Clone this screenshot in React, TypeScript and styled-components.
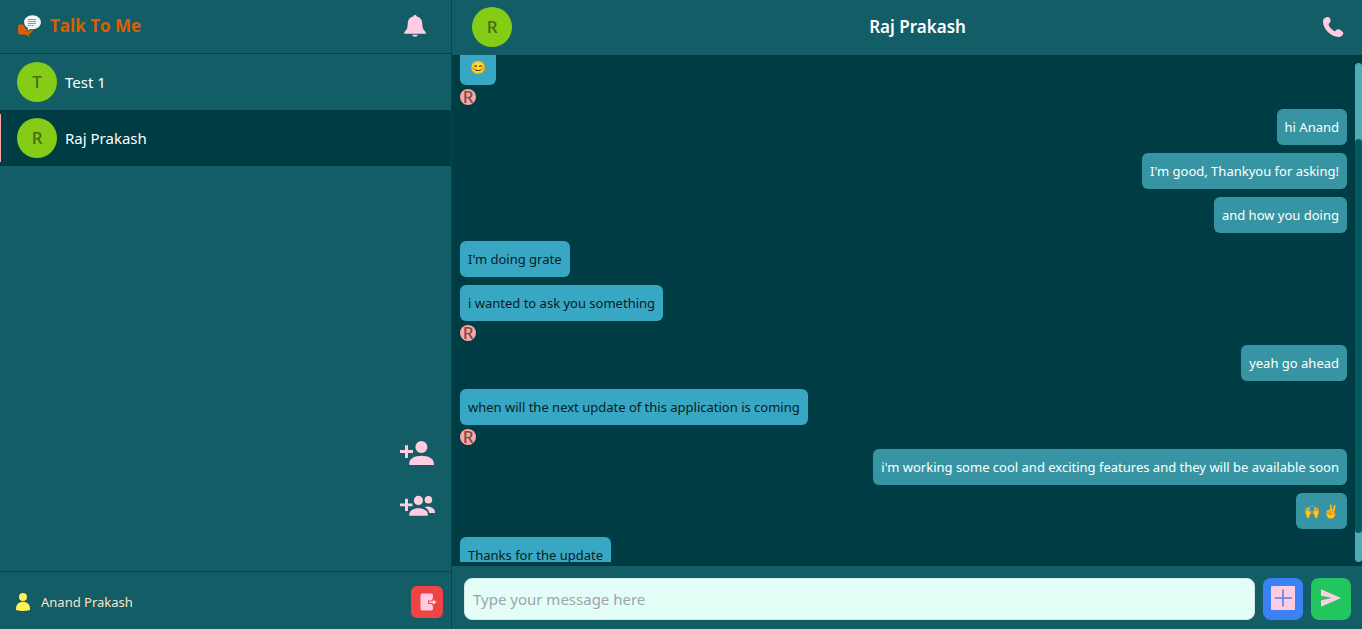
import React, { useLayoutEffect, useRef } from 'react';
import styled, { createGlobalStyle } from 'styled-components';

const color = {
  deep: '#003c43',
  panel: '#135d66',
  line: '#07464e',
  mint: '#e3fef7',
  pink: '#ffcce1',
  brand: '#d95f02',
};

const GlobalStyle = createGlobalStyle`
  *, *::before, *::after { box-sizing: border-box; }
  body {
    margin: 0;
    background: ${color.panel};
    color: #fff;
    font: 13px/20px "Noto Sans", "Open Sans", sans-serif;
  }
  button, input { font: inherit; }
  h1, h2, ul, p { margin: 0; padding: 0; }
  ul { list-style: none; }
  svg { display: block; }
`;

const Page = styled.div`
  display: grid;
  grid-template-columns: minmax(0, 452fr) minmax(0, 910fr);
  height: 100vh;
`;

const Sidebar = styled.aside`
  display: flex;
  flex-direction: column;
  min-height: 0;
  border-right: 1px solid ${color.line};
`;

const SidebarHeader = styled.header`
  display: flex;
  align-items: center;
  justify-content: space-between;
  height: 54px;
  padding: 0 25px 1px 18px;
  border-bottom: 1px solid ${color.line};
`;

const Brand = styled.div`
  display: flex;
  align-items: center;
  gap: 8px;
`;

const BrandName = styled.h1`
  color: ${color.brand};
  font-family: "Open Sans", "Noto Sans", sans-serif;
  font-size: 17px;
  line-height: 24px;
  font-weight: 700;
`;

const IconButton = styled.button`
  padding: 0;
  border: 0;
  background: none;
  color: ${color.pink};
  cursor: pointer;
`;

const ContactList = styled.ul`
  flex: 1;
  min-height: 0;
  overflow: hidden;
`;

const Contact = styled.button<{ $active?: boolean }>`
  position: relative;
  display: flex;
  align-items: center;
  gap: 8px;
  width: 100%;
  height: 56px;
  padding: 0 17px;
  border: 0;
  background: ${(p) => (p.$active ? color.deep : 'transparent')};
  color: #fff;
  font-size: 15px;
  text-align: left;
  cursor: pointer;

  &::before {
    content: '';
    display: ${(p) => (p.$active ? 'block' : 'none')};
    position: absolute;
    left: 0;
    top: 4px;
    bottom: 4px;
    width: 1px;
    background: #fca5a5;
  }
`;

const Avatar = styled.span`
  display: grid;
  place-items: center;
  flex: none;
  width: 40px;
  height: 40px;
  border-radius: 50%;
  background: #84cc16;
  color: #456b10;
  font-size: 17px;
  font-weight: 500;
`;

const SideActions = styled.div`
  display: flex;
  flex-direction: column;
  align-items: flex-end;
  gap: 28px;
  padding: 0 15px 53px;
`;

const SidebarFooter = styled.footer`
  display: flex;
  align-items: center;
  justify-content: space-between;
  height: 58px;
  padding: 2px 8px 0 16px;
  border-top: 1px solid ${color.line};
`;

const Account = styled.div`
  display: flex;
  align-items: center;
  gap: 11px;
  color: #fde3c8;
`;

const LogoutButton = styled.button`
  display: grid;
  place-items: center;
  width: 32px;
  height: 32px;
  padding: 0 0 0 3px;
  border: 0;
  border-radius: 6px;
  background: #ef4444;
  cursor: pointer;
`;

const Chat = styled.main`
  display: flex;
  flex-direction: column;
  min-height: 0;
  background: ${color.deep};
`;

const ChatHeader = styled.header`
  display: flex;
  align-items: center;
  justify-content: space-between;
  height: 55px;
  padding: 0 18px 1px 20px;
  background: ${color.panel};
`;

const ChatTitle = styled.h2`
  font-size: 17px;
  line-height: 24px;
  font-weight: 600;
`;

const Conversation = styled.div`
  display: flex;
  flex: 1;
  gap: 8px;
  min-height: 0;
  padding: 0 0 4px 8px;
`;

const MessageList = styled.div`
  display: flex;
  flex: 1;
  flex-direction: column;
  min-width: 0;
  overflow: hidden;
`;

const Bubble = styled.p<{ $mine?: boolean }>`
  flex: none;
  align-self: ${(p) => (p.$mine ? 'flex-end' : 'flex-start')};
  min-width: 36px;
  max-width: 75%;
  margin: 4px 0;
  padding: 8px;
  border-radius: 6px;
  background: ${(p) => (p.$mine ? '#3795a3' : '#37a7c3')};
  color: ${(p) => (p.$mine ? '#fff' : '#0b1c24')};
  text-align: center;
`;

const SeenMark = styled.span`
  display: flex;
  align-items: center;
  justify-content: center;
  flex: none;
  width: 16px;
  height: 16px;
  border-radius: 50%;
  background: #fca5a5;
  color: #7f4a4d;
  font-size: 17px;
  font-weight: 500;
  line-height: 16px;
`;

const ScrollTrack = styled.div`
  display: grid;
  grid-template-rows: 76fr 394fr 29fr;
  flex: none;
  width: 7px;
  margin-top: 8px;
  border-radius: 4px;
  background: #4facb3;
`;

const ScrollThumb = styled.div`
  grid-row: 2;
  border-radius: 4px;
  background: #045a5f;
`;

const Composer = styled.form`
  display: flex;
  gap: 8px;
  padding: 12px 11px 9px 12px;
  background: ${color.panel};
`;

const MessageInput = styled.input`
  flex: 1;
  min-width: 0;
  height: 42px;
  padding: 0 8px;
  border: 1px solid #d5e5e8;
  border-radius: 8px;
  background: ${color.mint};
  color: #12343a;
  font-size: 15px;

  &::placeholder { color: #9ca3af; opacity: 1; }
`;

const ComposerButton = styled.button<{ $tone: string }>`
  display: grid;
  place-items: center;
  width: 40px;
  height: 42px;
  padding: 0 0 2px;
  border: 0;
  border-radius: 8px;
  background: ${(p) => p.$tone};
  cursor: pointer;
`;

const Logo = () => (
  <svg width="24" height="24" viewBox="18 12 24 24" aria-hidden="true">
    <path fill={color.brand} d="M18 24.5Q18 22.6 20 22.6H23Q25 27 28 28.3Q30 28.6 32.8 27.9Q32.8 30.3 31.2 30.6Q30.6 32.2 28.5 32.3L29.9 35.4L25.2 32.4H19.8Q18 32.2 18 30Z" />
    <path fill="#f3f6f8" stroke={color.panel} strokeWidth="1.4" paintOrder="stroke" d="M32.5 13.3C37.2 13.3 40.9 16.2 40.9 20.2S37.2 27.2 32.5 27.2C31.7 27.2 31 27.1 30.3 27L27.6 28.6L28 26C25.5 24.8 24.1 22.7 24.1 20.2C24.1 16.2 27.8 13.3 32.5 13.3Z" />
    <path stroke="#8498a1" strokeWidth="1" d="M28 17.5H36M28 19.5H36M28 21.5H36" />
    <path stroke="#6d838d" strokeWidth="1" strokeDasharray="1.4 .6" d="M28 23.6H33.5" />
  </svg>
);

const BellIcon = () => (
  <svg width="22" height="22" viewBox="0 0 22 22" fill="currentColor" aria-hidden="true">
    <path d="M11 0C12 0 12.7.6 12.9 1.5C16 2.3 18 4.3 18.2 8C18.4 12 18.7 13.5 20 15.2C21 16.5 22 17 22 18.7H0C0 17 1 16.5 2 15.2C3.3 13.5 3.6 12 3.8 8C4 4.3 6 2.3 9.1 1.5C9.3.6 10 0 11 0Z" />
    <path d="M8 19.8H14C13.6 21.1 12.5 21.8 11 21.8S8.4 21.1 8 19.8Z" />
  </svg>
);

const PhoneIcon = () => (
  <svg width="21" height="21" viewBox="0 0 21 21" fill="currentColor" aria-hidden="true">
    <path d="M0 4.5C0 1.5 2.5 0 5 0C6.2 0 7 1 7.4 2.5C7.9 4 7.6 5 6.5 6C5.5 7 5.5 8 6.3 9.3C7.5 11.3 9.5 13.2 11.5 14.3C12.8 14.2 13.3 12.5 14.8 12.3C16.5 12.2 20 14.5 20.3 16C20.4 18 18 20 15.5 20C8 19.8 0 12 0 4.5Z" />
  </svg>
);

const AddPersonIcon = () => (
  <svg width="36" height="26" viewBox="0 0 36 26" fill="currentColor" aria-hidden="true">
    <path d="M5 5.3H8V10H13V13H8V18H5V13H0V10H5Z" />
    <circle cx="21.4" cy="7" r="6" />
    <path d="M9.3 25V23C9.3 18.5 15 15.7 21.5 15.7S33.8 18.5 33.8 23V25Z" />
  </svg>
);

const AddGroupIcon = () => (
  <svg width="36" height="24" viewBox="0 0 36 24" fill="currentColor" aria-hidden="true">
    <path d="M5 4.7H8V9.5H12.5V12.3H8V17H5V12.3H0V9.5H5Z" />
    <circle cx="18.4" cy="6.4" r="4.6" />
    <circle cx="28.4" cy="5.7" r="3.8" />
    <path d="M9.3 21.8V20.3C9.3 16.6 13.5 14.2 18.5 14.2S27.8 16.6 27.8 20.3V21.8Z" />
    <path d="M24.4 13.1C29.5 11.4 35 14 35 18.2V19.1H29.2C28.7 16.3 27 14.3 24.4 13.1Z" />
  </svg>
);

const UserIcon = () => (
  <svg width="14" height="18" viewBox="0 0 14 18" fill="#fff150" aria-hidden="true">
    <circle cx="7" cy="4" r="4" />
    <path d="M0 17V15.5C0 11.5 3.2 8.8 7 8.8S14 11.5 14 15.5V17Q11 17.9 7 17.9T0 17Z" />
  </svg>
);

const LogoutIcon = () => (
  <svg width="18" height="18" viewBox="0 0 18 18" aria-hidden="true">
    <path fill={color.pink} d="M2.5.6H11Q13 .6 13 2.5V15.5Q13 17.5 11 17.5H2.5Q.5 17.5 .5 15.5V2.5Q.5.6 2.5.6Z" />
    <path fill={color.pink} stroke="#ef4444" strokeWidth="1" d="M8.5 7.9H12.7V5.7L17.3 9.2L12.7 12.7V10.5H8.5Z" />
  </svg>
);

const PlusIcon = () => (
  <svg width="24" height="24" viewBox="0 0 24 24" aria-hidden="true">
    <rect width="24" height="24" rx="1" fill={color.pink} />
    <path stroke="#4f83ee" strokeWidth="1.6" d="M12 3.5V20.5M3.8 12H20.8" />
  </svg>
);

const SendIcon = () => (
  <svg width="20" height="18" viewBox="0 0 20 18" aria-hidden="true">
    <path fill={color.pink} d="M0 .3L20 9L0 17.7V11.2L11 9L0 6.8Z" />
  </svg>
);

type Entry = { text: string; mine?: boolean; seen?: boolean };

const contacts = [{ name: 'Test 1' }, { name: 'Raj Prakash', active: true }];

const messages: Entry[] = [
  { text: '😊', seen: true },
  { text: 'hi Anand', mine: true },
  { text: "I'm good, Thankyou for asking!", mine: true },
  { text: 'and how you doing', mine: true },
  { text: "I'm doing grate" },
  { text: 'i wanted to ask you something', seen: true },
  { text: 'yeah go ahead', mine: true },
  { text: 'when will the next update of this application is coming', seen: true },
  { text: "i'm working some cool and exciting features and they will be available soon", mine: true },
  { text: '🙌 ✌️', mine: true },
  { text: 'Thanks for the update' },
];

export default function App() {
  const listRef = useRef<HTMLDivElement>(null);

  useLayoutEffect(() => {
    if (listRef.current) listRef.current.scrollTop = 10;
  }, []);

  return (
    <>
      <GlobalStyle />
      <Page>
        <Sidebar>
          <SidebarHeader>
            <Brand>
              <Logo />
              <BrandName>Talk To Me</BrandName>
            </Brand>
            <IconButton type="button" aria-label="Notifications">
              <BellIcon />
            </IconButton>
          </SidebarHeader>
          <ContactList>
            {contacts.map((c) => (
              <li key={c.name}>
                <Contact type="button" $active={c.active}>
                  <Avatar aria-hidden="true">{c.name[0]}</Avatar>
                  {c.name}
                </Contact>
              </li>
            ))}
          </ContactList>
          <SideActions>
            <IconButton type="button" aria-label="Add contact">
              <AddPersonIcon />
            </IconButton>
            <IconButton type="button" aria-label="Create group">
              <AddGroupIcon />
            </IconButton>
          </SideActions>
          <SidebarFooter>
            <Account>
              <UserIcon />
              Anand Prakash
            </Account>
            <LogoutButton type="button" aria-label="Log out">
              <LogoutIcon />
            </LogoutButton>
          </SidebarFooter>
        </Sidebar>
        <Chat>
          <ChatHeader>
            <Avatar aria-hidden="true">R</Avatar>
            <ChatTitle>Raj Prakash</ChatTitle>
            <IconButton type="button" aria-label="Call">
              <PhoneIcon />
            </IconButton>
          </ChatHeader>
          <Conversation>
            <MessageList ref={listRef}>
              {messages.map((m) => (
                <React.Fragment key={m.text}>
                  <Bubble $mine={m.mine}>{m.text}</Bubble>
                  {m.seen && <SeenMark>R</SeenMark>}
                </React.Fragment>
              ))}
            </MessageList>
            <ScrollTrack aria-hidden="true">
              <ScrollThumb />
            </ScrollTrack>
          </Conversation>
          <Composer onSubmit={(e) => e.preventDefault()}>
            <MessageInput type="text" aria-label="Message" placeholder="Type your message here" />
            <ComposerButton type="button" $tone="#3b82f6" aria-label="Attach">
              <PlusIcon />
            </ComposerButton>
            <ComposerButton type="submit" $tone="#22c55e" aria-label="Send">
              <SendIcon />
            </ComposerButton>
          </Composer>
        </Chat>
      </Page>
    </>
  );
}
